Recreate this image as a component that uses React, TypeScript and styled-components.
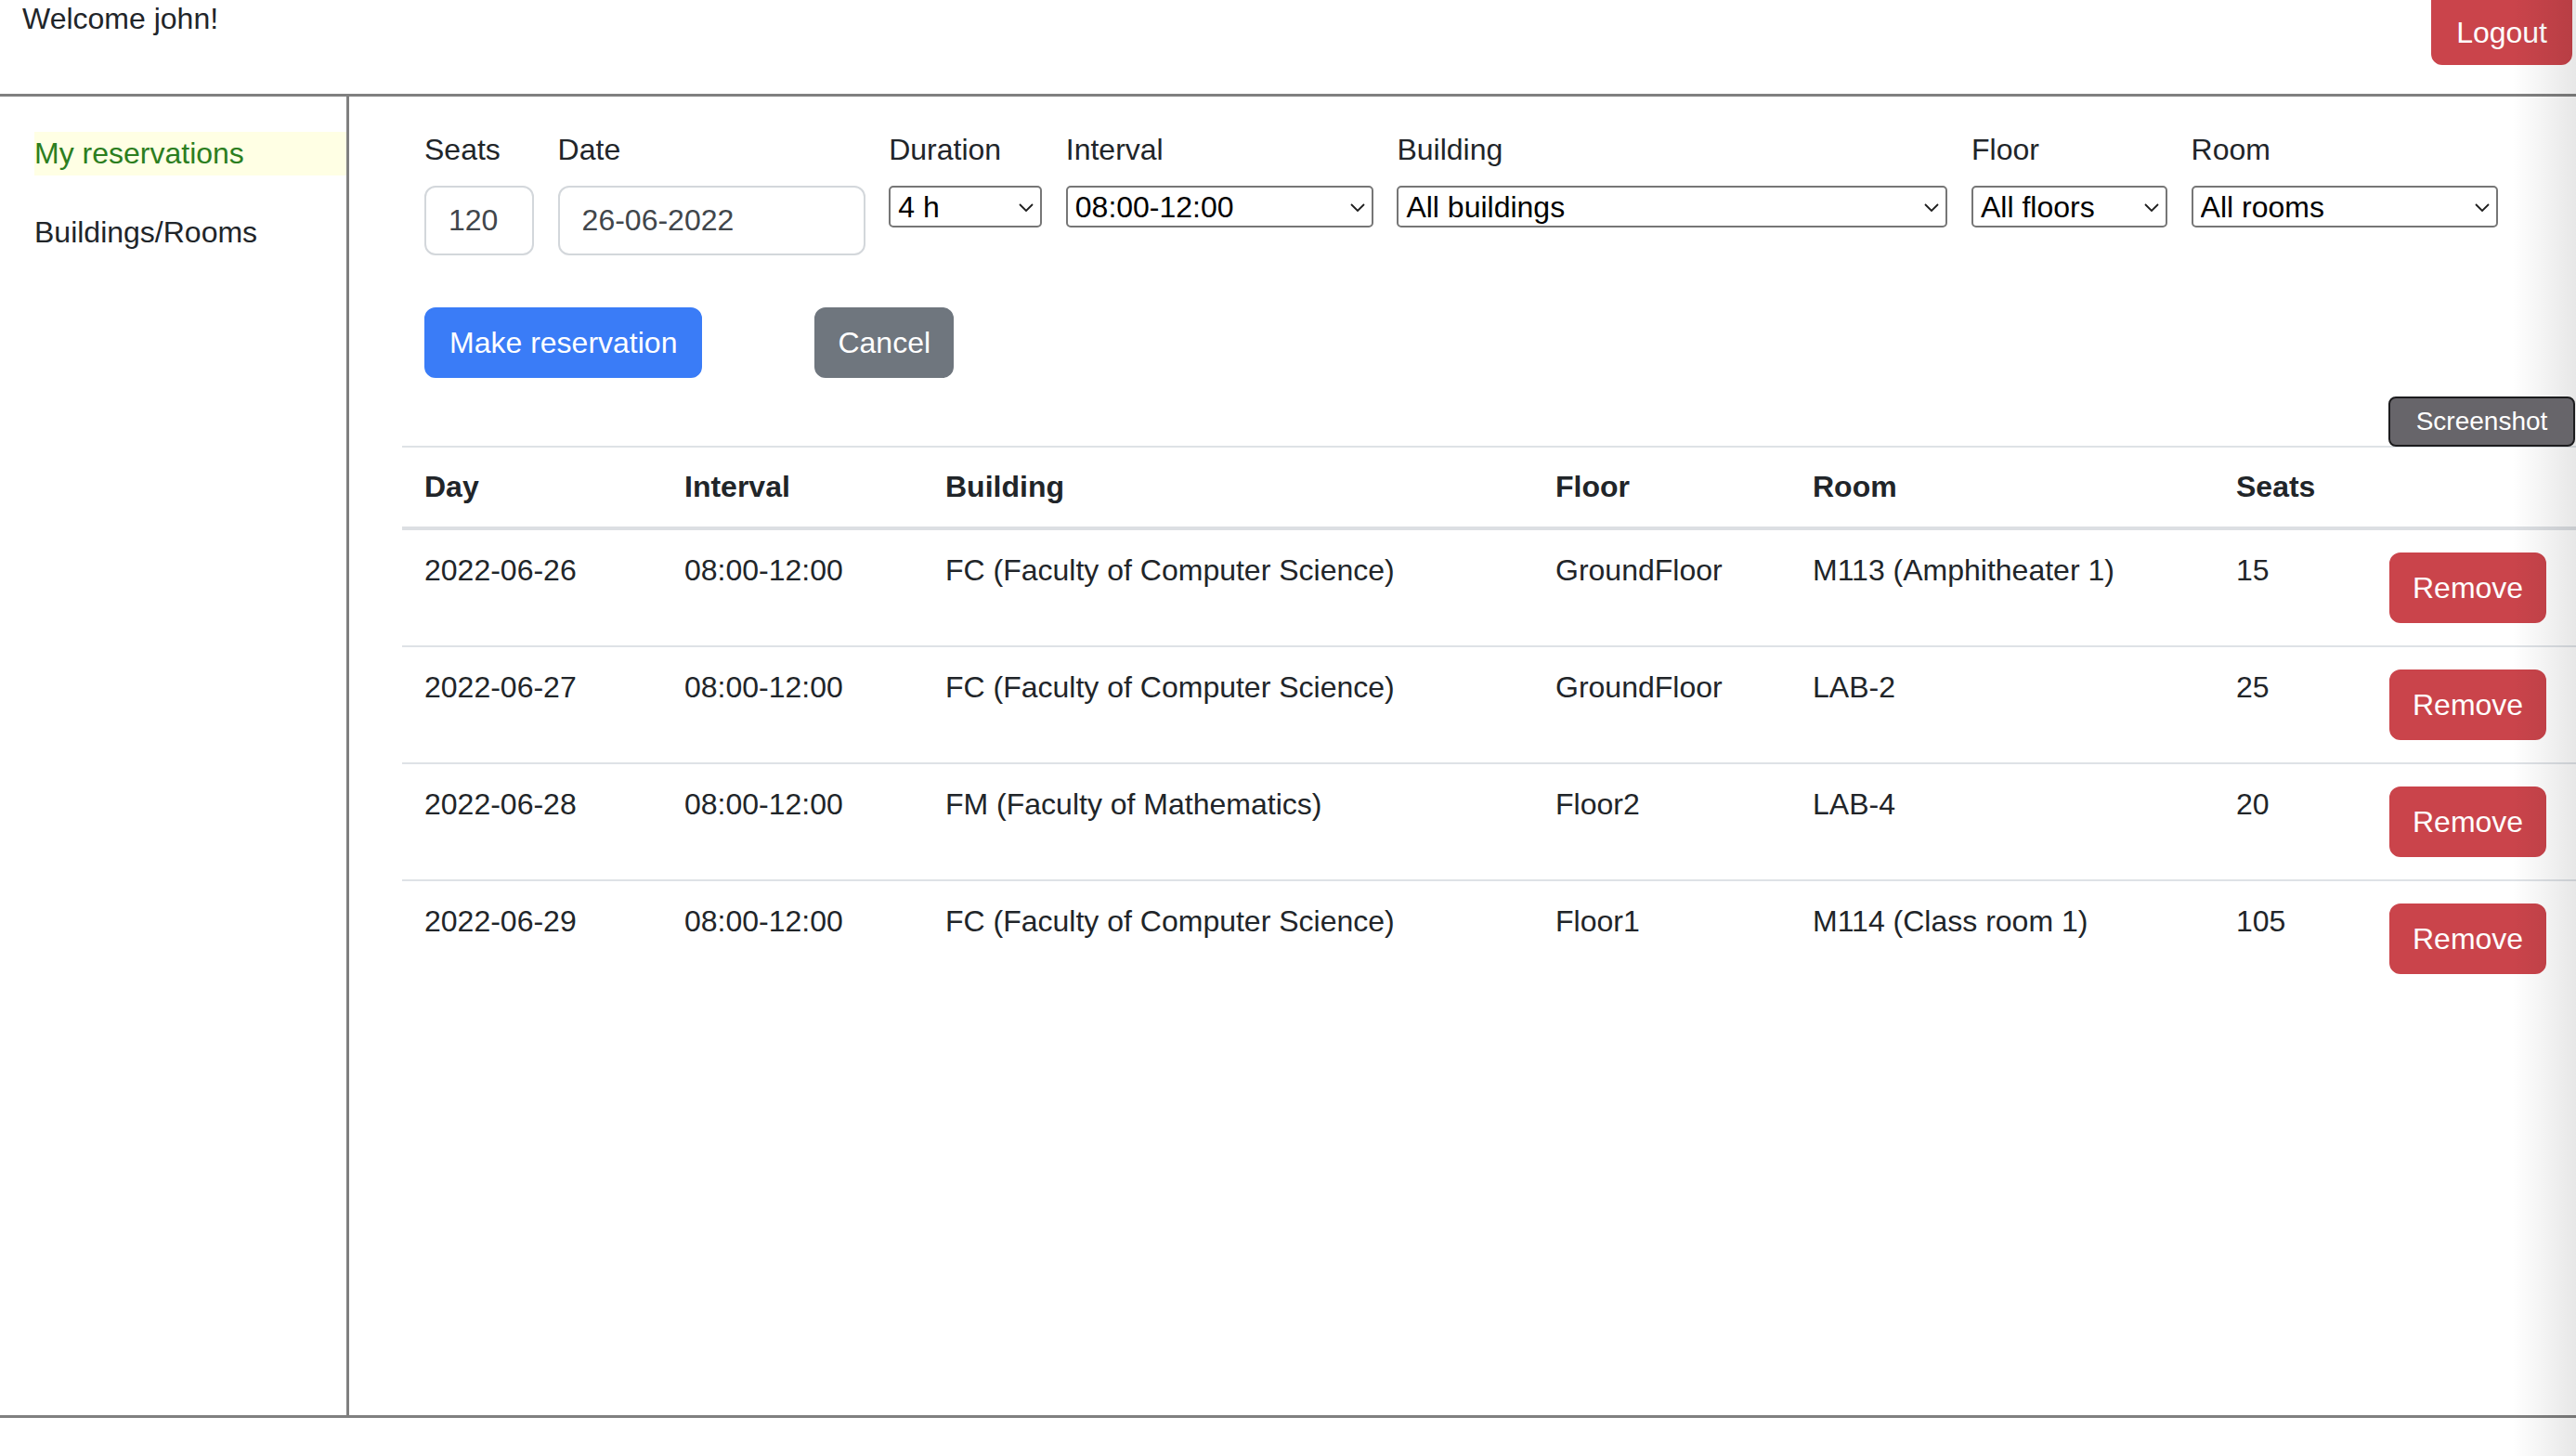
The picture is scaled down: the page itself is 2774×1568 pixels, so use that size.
import React from "react";
import styled, { createGlobalStyle, css } from "styled-components";

const GlobalStyle = createGlobalStyle`
  html, body {
    margin: 0;
    padding: 0;
    background: #ffffff;
    color: #212529;
    font-family: "Liberation Sans", Arial, Helvetica, sans-serif;
  }
  body { overflow: hidden; }
  * { box-sizing: border-box; }
`;

const Page = styled.div`
  width: 2774px;
  height: 1568px;
  position: relative;
  overflow: hidden;
`;

const EdgeShade = styled.div`
  position: absolute;
  top: 0;
  right: 0;
  width: 68px;
  height: 100%;
  pointer-events: none;
  background: linear-gradient(to right, rgba(0, 0, 0, 0), rgba(0, 0, 0, 0.095));
`;

const Header = styled.header`
  height: 104px;
  display: flex;
  justify-content: space-between;
  align-items: flex-start;
  padding: 0 4px 0 24px;
  border-bottom: 3px solid #808080;
`;

const Welcome = styled.div`
  font-size: 32px;
  line-height: 40px;
`;

const baseButton = css`
  border: 2px solid transparent;
  color: #ffffff;
  font-family: inherit;
  font-size: 32px;
  line-height: 1;
  display: inline-flex;
  align-items: center;
  justify-content: center;
  cursor: pointer;
`;

const LogoutButton = styled.button`
  ${baseButton};
  height: 70px;
  padding: 0 25px;
  background: #ca444b;
  border-color: #ca444b;
  border-radius: 0 0 12px 12px;
`;

const Body = styled.div`
  display: flex;
  height: 1423px;
  border-bottom: 3px solid #808080;
`;

const Sidebar = styled.nav`
  width: 376px;
  flex: none;
  border-right: 3px solid #808080;
  padding: 38px 0 0 37px;
  display: flex;
  flex-direction: column;
  gap: 38px;
`;

const NavItem = styled.div<{ $active?: boolean }>`
  height: 47px;
  line-height: 47px;
  font-size: 32px;
  color: ${(p) => (p.$active ? "#2c7e20" : "#212529")};
  background: ${(p) => (p.$active ? "#ffffe4" : "transparent")};
`;

const Main = styled.main`
  flex: 1;
  position: relative;
  padding: 33px 0 0 57px;
`;

const Form = styled.div`
  padding-left: 24px;
`;

const FieldRow = styled.div`
  display: flex;
  gap: 25.6px;
  align-items: flex-start;
`;

const Field = styled.div<{ $w: number }>`
  width: ${(p) => p.$w}px;
  display: flex;
  flex-direction: column;
`;

const Label = styled.label`
  font-size: 32px;
  line-height: 48px;
  margin-bottom: 15px;
`;

const TextInput = styled.input`
  width: 100%;
  height: 75px;
  border: 2px solid #d3d7db;
  border-radius: 12px;
  padding: 0 24px;
  font-family: inherit;
  font-size: 32px;
  color: #41464b;
  background: #ffffff;
  outline: none;
`;

const SelectBox = styled.div`
  position: relative;
  width: 100%;
  height: 45px;
`;

const NativeSelect = styled.select`
  appearance: none;
  -webkit-appearance: none;
  width: 100%;
  height: 45px;
  border: 2px solid #767676;
  border-radius: 5px;
  padding: 0 36px 0 8px;
  font-family: inherit;
  font-size: 32px;
  color: #000000;
  background: #ffffff;
  outline: none;
`;

const Chevron = styled.svg`
  position: absolute;
  right: 9px;
  top: 19px;
  width: 16px;
  height: 9px;
  pointer-events: none;
`;

const ButtonRow = styled.div`
  display: flex;
  gap: 121px;
  margin-top: 56px;
`;

const variantColor = {
  primary: "#3a7cf7",
  secondary: "#6f767e",
  danger: "#ca444b",
};

const ActionButton = styled.button<{ $variant: "primary" | "secondary" | "danger" }>`
  ${baseButton};
  height: 76px;
  padding: 0 ${(p) => (p.$variant === "primary" ? 25 : 23)}px;
  border-radius: 12px;
  background: ${(p) => variantColor[p.$variant]};
  border-color: ${(p) => variantColor[p.$variant]};
`;

const ScreenshotButton = styled.button`
  position: absolute;
  top: 323px;
  right: 1px;
  width: 201px;
  height: 54px;
  border: 2px solid #1c1c1e;
  border-radius: 8px;
  background: #67656a;
  color: #ffffff;
  font-family: inherit;
  font-size: 28px;
  display: flex;
  align-items: center;
  justify-content: center;
  padding: 0;
  z-index: 2;
`;

const Table = styled.table`
  margin-top: 73px;
  width: 100%;
  border-collapse: separate;
  border-spacing: 0;
  table-layout: fixed;
  border-top: 2px solid #dee2e6;
  font-size: 32px;
  line-height: 48px;
`;

const HeadCell = styled.th`
  text-align: left;
  font-weight: 700;
  padding: 18px 0 19px 24px;
  border-bottom: 4px solid #dcdfe3;
  white-space: nowrap;
`;

const Cell = styled.td<{ $last?: boolean; $action?: boolean }>`
  vertical-align: top;
  padding: ${(p) => (p.$action ? "24px 0 24px 24px" : "19px 0 0 24px")};
  border-bottom: ${(p) => (p.$last ? "none" : "2px solid #dee2e6")};
  white-space: nowrap;
`;

type Reservation = {
  day: string;
  interval: string;
  building: string;
  floor: string;
  room: string;
  seats: number;
};

const reservations: Reservation[] = [
  { day: "2022-06-26", interval: "08:00-12:00", building: "FC (Faculty of Computer Science)", floor: "GroundFloor", room: "M113 (Amphitheater 1)", seats: 15 },
  { day: "2022-06-27", interval: "08:00-12:00", building: "FC (Faculty of Computer Science)", floor: "GroundFloor", room: "LAB-2", seats: 25 },
  { day: "2022-06-28", interval: "08:00-12:00", building: "FM (Faculty of Mathematics)", floor: "Floor2", room: "LAB-4", seats: 20 },
  { day: "2022-06-29", interval: "08:00-12:00", building: "FC (Faculty of Computer Science)", floor: "Floor1", room: "M114 (Class room 1)", seats: 105 },
];

const columns = [280, 281, 657, 277, 456, 165];

function Select({ value }: { value: string }) {
  return (
    <SelectBox>
      <NativeSelect defaultValue={value}>
        <option>{value}</option>
      </NativeSelect>
      <Chevron viewBox="0 0 16 9">
        <polyline points="1,1 8,8 15,1" fill="none" stroke="#1e1e1e" strokeWidth="1.8" />
      </Chevron>
    </SelectBox>
  );
}

export default function App() {
  return (
    <>
      <GlobalStyle />
      <Page>
        <Header>
          <Welcome>Welcome john!</Welcome>
          <LogoutButton>Logout</LogoutButton>
        </Header>
        <Body>
          <Sidebar>
            <NavItem $active>My reservations</NavItem>
            <NavItem>Buildings/Rooms</NavItem>
          </Sidebar>
          <Main>
            <Form>
              <FieldRow>
                <Field $w={118}>
                  <Label>Seats</Label>
                  <TextInput defaultValue="120" />
                </Field>
                <Field $w={331}>
                  <Label>Date</Label>
                  <TextInput defaultValue="26-06-2022" />
                </Field>
                <Field $w={165}>
                  <Label>Duration</Label>
                  <Select value="4 h" />
                </Field>
                <Field $w={331}>
                  <Label>Interval</Label>
                  <Select value="08:00-12:00" />
                </Field>
                <Field $w={593}>
                  <Label>Building</Label>
                  <Select value="All buildings" />
                </Field>
                <Field $w={211}>
                  <Label>Floor</Label>
                  <Select value="All floors" />
                </Field>
                <Field $w={330}>
                  <Label>Room</Label>
                  <Select value="All rooms" />
                </Field>
              </FieldRow>
              <ButtonRow>
                <ActionButton $variant="primary">Make reservation</ActionButton>
                <ActionButton $variant="secondary">Cancel</ActionButton>
              </ButtonRow>
            </Form>
            <ScreenshotButton>Screenshot</ScreenshotButton>
            <Table>
              <colgroup>
                {columns.map((w, i) => (
                  <col key={i} style={{ width: w }} />
                ))}
                <col />
              </colgroup>
              <thead>
                <tr>
                  <HeadCell>Day</HeadCell>
                  <HeadCell>Interval</HeadCell>
                  <HeadCell>Building</HeadCell>
                  <HeadCell>Floor</HeadCell>
                  <HeadCell>Room</HeadCell>
                  <HeadCell>Seats</HeadCell>
                  <HeadCell />
                </tr>
              </thead>
              <tbody>
                {reservations.map((r, i) => {
                  const last = i === reservations.length - 1;
                  return (
                    <tr key={r.day}>
                      <Cell $last={last}>{r.day}</Cell>
                      <Cell $last={last}>{r.interval}</Cell>
                      <Cell $last={last}>{r.building}</Cell>
                      <Cell $last={last}>{r.floor}</Cell>
                      <Cell $last={last}>{r.room}</Cell>
                      <Cell $last={last}>{r.seats}</Cell>
                      <Cell $last={last} $action>
                        <ActionButton $variant="danger">Remove</ActionButton>
                      </Cell>
                    </tr>
                  );
                })}
              </tbody>
            </Table>
          </Main>
        </Body>
        <EdgeShade />
      </Page>
    </>
  );
}
